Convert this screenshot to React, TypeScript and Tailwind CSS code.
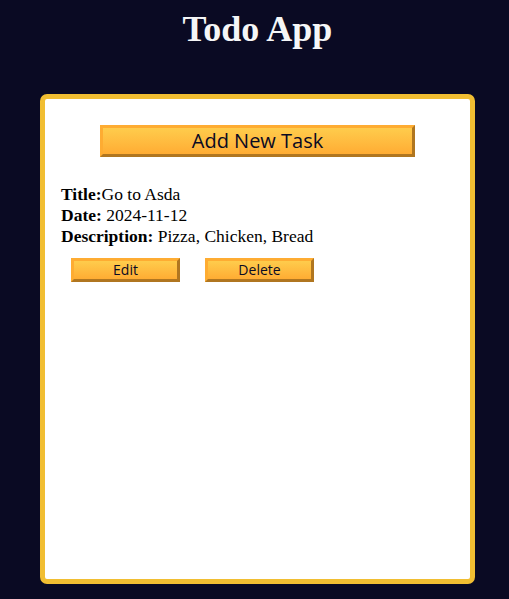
export default function App() {
  const btn =
    'bg-gradient-to-b from-[#fecc4c] to-[#ffac33] border-[3px] border-t-[#feac32] border-l-[#feac32] border-b-[#b07620] border-r-[#b07620] text-[#0a0a23] font-["Open_Sans",sans-serif] cursor-pointer'

  return (
    <div className="min-h-screen bg-[#0a0a23] flex flex-col items-center pl-[6px]">
      <h1 className='mt-[9px] text-[36px] leading-[40px] font-bold text-[#f5f6f7] font-["Liberation_Serif",serif]'>
        Todo App
      </h1>

      <div className="mt-[45px] w-[435px] h-[490px] bg-white border-[5px] border-[#f1be32] rounded-[7px] px-[15px] pt-[26px] flex flex-col">
        <button className={`${btn} self-center w-[315px] h-[32px] text-[20px] leading-none`}>
          Add New Task
        </button>

        <div className='mt-[27px] font-["Liberation_Serif",serif] text-[17.5px] leading-[21px] text-black pl-[1px]'>
          <p><strong>Title:</strong>Go to Asda</p>
          <p><strong>Date:</strong> 2024-11-12</p>
          <p><strong>Description:</strong> Pizza, Chicken, Bread</p>
          <div className="flex gap-[25px] mt-[11px] ml-[10px]">
            <button className={`${btn} w-[109px] h-[24px] text-[14px] leading-none`}>Edit</button>
            <button className={`${btn} w-[109px] h-[24px] text-[14px] leading-none`}>Delete</button>
          </div>
        </div>
      </div>
    </div>
  )
}
